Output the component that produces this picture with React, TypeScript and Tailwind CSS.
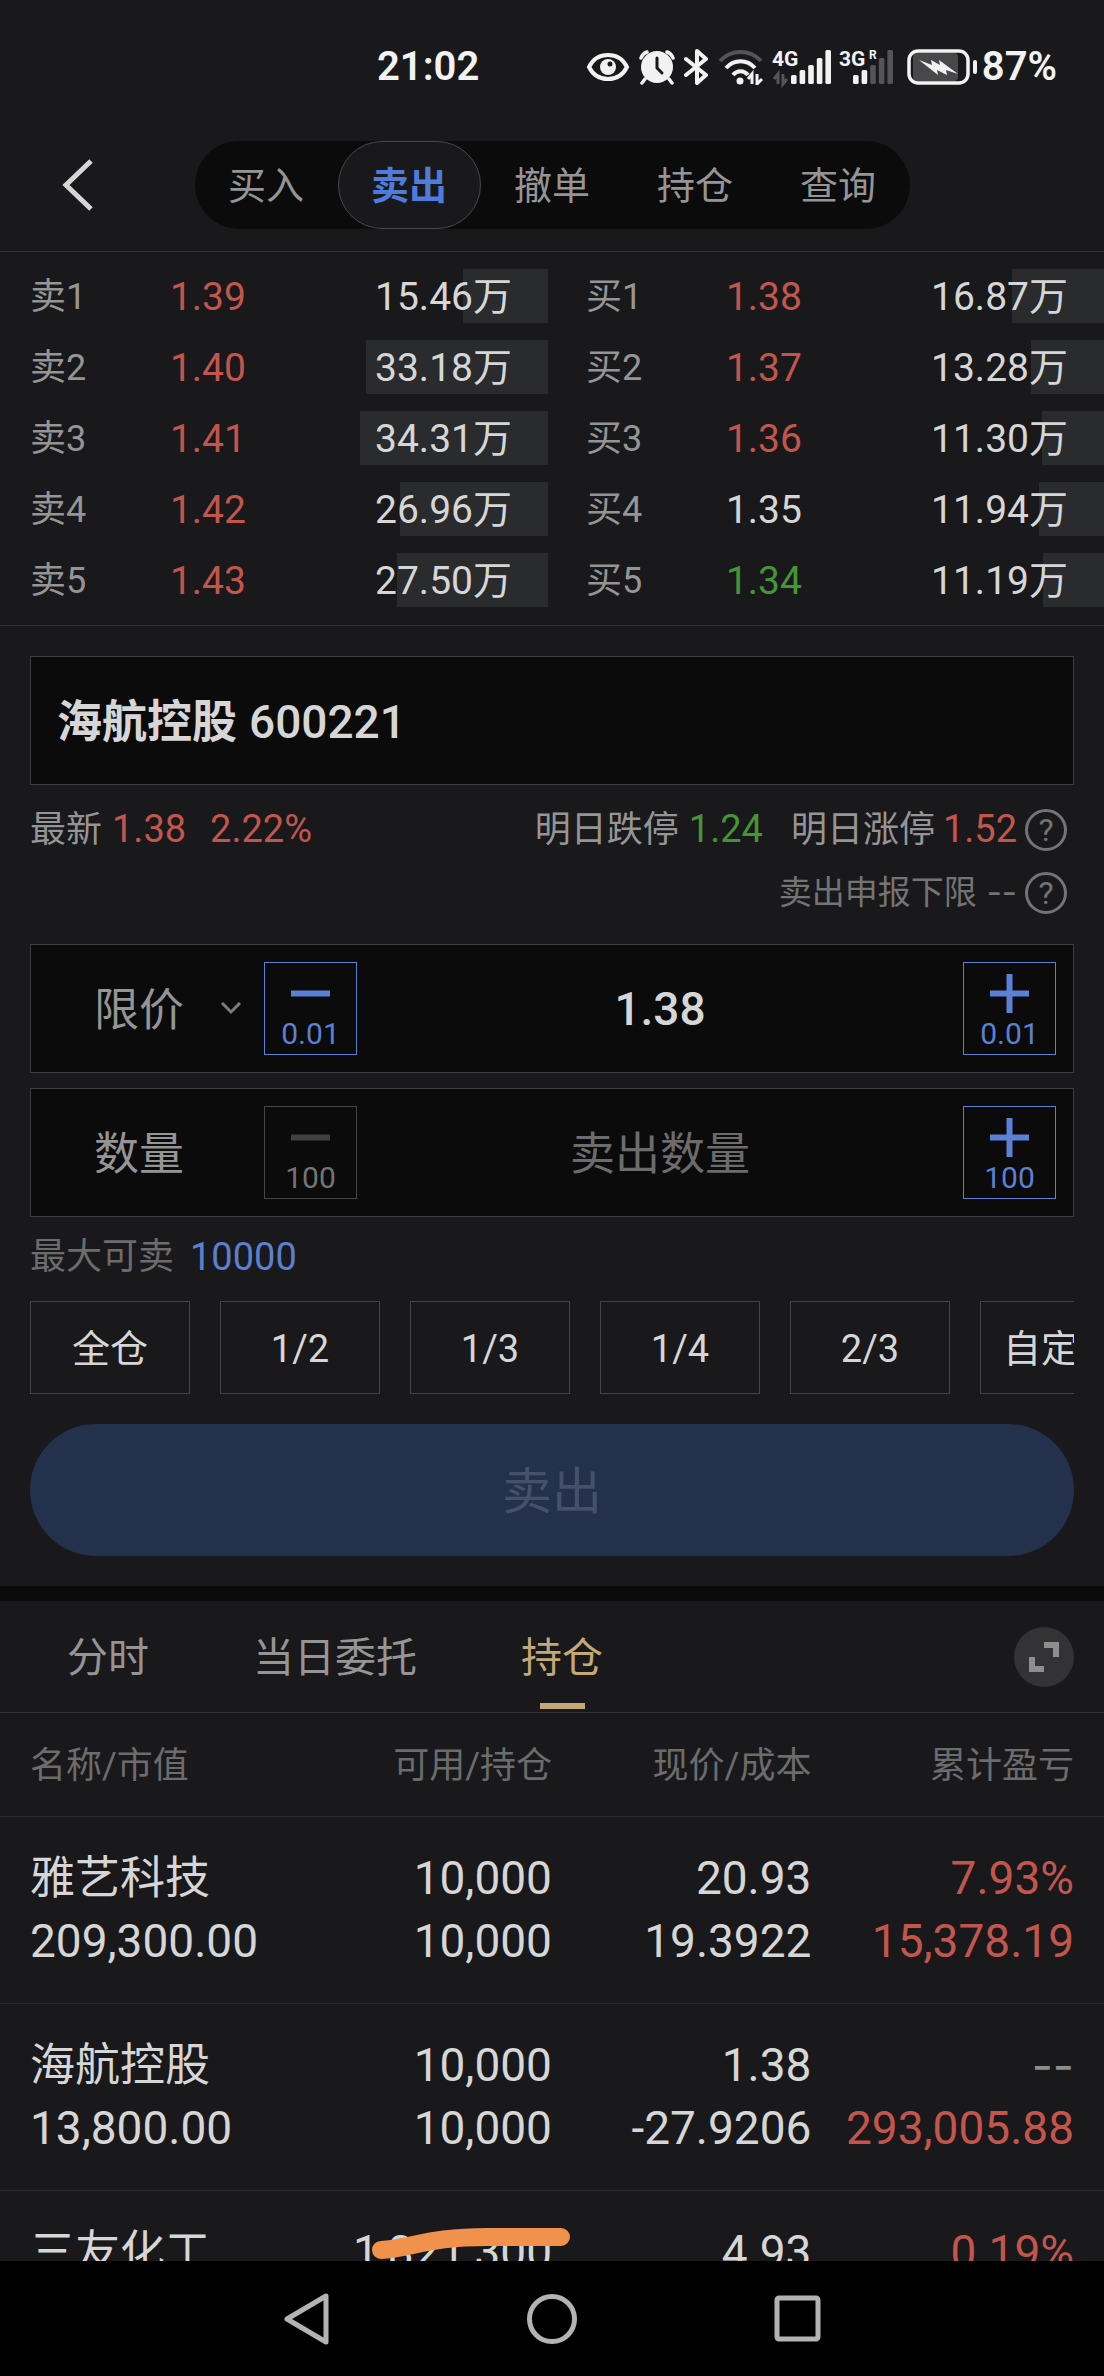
import { useState } from 'react'
import { clsx } from 'clsx'

const navTabs = ['买入', '卖出', '撤单', '持仓', '查询']
const subTabs = ['分时', '当日委托', '持仓']
const fractions = ['全仓', '1/2', '1/3', '1/4', '2/3', '自定义']

const asks = [
  { label: '卖1', price: '1.39', vol: 15.46, tone: 'up' },
  { label: '卖2', price: '1.40', vol: 33.18, tone: 'up' },
  { label: '卖3', price: '1.41', vol: 34.31, tone: 'up' },
  { label: '卖4', price: '1.42', vol: 26.96, tone: 'up' },
  { label: '卖5', price: '1.43', vol: 27.5, tone: 'up' },
]
const bids = [
  { label: '买1', price: '1.38', vol: 16.87, tone: 'up' },
  { label: '买2', price: '1.37', vol: 13.28, tone: 'up' },
  { label: '买3', price: '1.36', vol: 11.3, tone: 'up' },
  { label: '买4', price: '1.35', vol: 11.94, tone: 'flat' },
  { label: '买5', price: '1.34', vol: 11.19, tone: 'down' },
]
const maxVol = Math.max(...[...asks, ...bids].map(l => l.vol))

const toneCls: Record<string, string> = {
  up: 'text-[#c2564d]',
  down: 'text-[#459536]',
  flat: 'text-[#d6d6d6]',
  none: "font-['Inter',sans-serif] text-[#8e8e8e]",
}

const holdings = [
  { name: '雅艺科技', value: '209,300.00', avail: '10,000', total: '10,000', price: '20.93', cost: '19.3922', pct: '7.93%', pnl: '15,378.19', tone: 'up' },
  { name: '海航控股', value: '13,800.00', avail: '10,000', total: '10,000', price: '1.38', cost: '-27.9206', pct: '--', pnl: '293,005.88', tone: 'none' },
  { name: '三友化工', value: '', avail: '1,821,300', total: '', price: '4.93', cost: '', pct: '0.19%', pnl: '', tone: 'up', marked: true },
]

function SignalBars({ tag, lit, roaming }: { tag: string; lit: number; roaming?: boolean }) {
  const tops = [26, 21, 16, 9, 1]
  return (
    <svg width="58" height="36" viewBox="0 0 58 36" className="overflow-visible font-bold">
      {tops.map((y, i) => (
        <rect key={y} x={(roaming ? 13 : 18) + i * 8.6} y={y} width="5.6" height={35 - y} rx="1.5" fill={i < lit ? '#f2f2f2' : '#555557'} />
      ))}
      <text x="-1" y="17" fontSize="21" fill="#f2f2f2">{tag}</text>
      {roaming
        ? <text x="29" y="10" fontSize="12" fill="#f2f2f2">R</text>
        : <path d="M5 35V25L1 30M10 25v10l4-5" stroke="#555557" strokeWidth="3" fill="none" />}
    </svg>
  )
}

function StatusBar() {
  return (
    <div className="flex h-[134px] items-center justify-between pl-[377px] pr-[47px] text-[40px] font-semibold text-[#f2f2f2]">
      <span>21:02</span>
      <div className="flex items-center gap-[9px]">
        <svg width="44" height="30" viewBox="0 0 44 30" fill="none">
          <path d="M3 15C7 7 14 3 22 3s15 4 19 12c-4 8-11 12-19 12S7 23 3 15z" stroke="currentColor" strokeWidth="4" />
          <circle cx="22" cy="15" r="8" fill="currentColor" />
          <circle cx="24" cy="12" r="2.5" fill="#19191b" />
        </svg>
        <svg width="36" height="36" viewBox="0 0 36 36" fill="none" stroke="currentColor" strokeWidth="3.5" strokeLinecap="round">
          <circle cx="18" cy="18" r="16" fill="currentColor" stroke="none" />
          <path d="M2 9c1-3 3-5 6-6M34 9c-1-3-3-5-6-6M6 30l-3 4M30 30l3 4" />
          <path d="M18 9v10l5 5" stroke="#19191b" strokeWidth="3" />
        </svg>
        <svg width="25" height="36" viewBox="0 0 25 36" fill="none" stroke="currentColor" strokeWidth="4" strokeLinejoin="round" strokeLinecap="round">
          <path d="M2 10l20 16-9 8V2l9 8L2 26" />
        </svg>
        <svg width="46" height="36" viewBox="0 0 46 36" fill="none" strokeWidth="4">
          <path d="M2 12c11-12 30-12 41 0" stroke="#555557" />
          <path d="M8 19c8-9 21-9 29 0M15 26c4-5 11-5 15 0" stroke="currentColor" />
          <circle cx="22" cy="32" r="3.5" fill="currentColor" />
          <path d="M34 35V25l-4 5M39 25v10l5-5" stroke="currentColor" strokeWidth="3" />
        </svg>
        <SignalBars tag="4G" lit={5} />
        <SignalBars tag="3G" lit={2} roaming />
        <div className="flex items-center gap-1">
          <svg width="71" height="36" viewBox="0 0 71 36" fill="none">
            <rect x="6" y="4" width="45" height="28" rx="4" fill="#48484a" />
            <rect x="2" y="2" width="59" height="32" rx="9" stroke="currentColor" strokeWidth="3.5" />
            <rect x="66" y="11" width="4" height="14" rx="2" fill="currentColor" />
            <path d="M12 11l13 5-1-5 9 5-1-5 19 14-12-4 1 5-10-5 1 5z" fill="currentColor" />
          </svg>
          <span>87%</span>
        </div>
      </div>
    </div>
  )
}

function OrderBook({ levels, name }: { levels: typeof asks; name: string }) {
  return (
    <table aria-label={name} className="w-full table-fixed border-separate border-spacing-x-0 border-spacing-y-[17px]">
      <tbody>
        {levels.map(l => (
          <tr key={l.label} className="h-[54px] text-[39px] leading-[52px]">
            <th scope="row" className="w-[31%] p-0 pl-[30px] pt-[2px] text-left text-[36px] font-normal text-[#959595]">{l.label}</th>
            <td className={clsx('w-[20%] p-0 pt-[2px]', toneCls[l.tone])}>{l.price}</td>
            <td className="relative p-0 pr-9 pt-[2px] text-right text-[#d6d6d6]">
              <span className="absolute inset-y-0 right-0 bg-[#2a2b2d]" style={{ width: `${(l.vol / maxVol) * 70}%` }} />
              <span className="relative">{l.vol.toFixed(2)}万</span>
            </td>
          </tr>
        ))}
      </tbody>
    </table>
  )
}

function HelpButton({ label }: { label: string }) {
  return (
    <button aria-label={label} className="ml-2 flex size-[42px] items-center justify-center rounded-full border-[3px] border-[#747474] text-[32px] leading-none text-[#747474]">
      ?
    </button>
  )
}

function StepButton({ kind, step, off, onClick }: { kind: 'minus' | 'plus'; step: string; off?: boolean; onClick: () => void }) {
  return (
    <button onClick={onClick} disabled={off} aria-label={`${kind === 'minus' ? '减' : '加'}${step}`}
      className={clsx('flex size-[93px] shrink-0 flex-col items-center border pt-[11px] text-[30px] leading-[42px]', off ? 'border-[#454547] text-[#747474]' : 'border-[#5b80cf] text-[#5b80d4]')}>
      <svg width="39" height="39" viewBox="0 0 39 39" className={clsx('shrink-0', off && 'text-[#404040]')}>
        <path d={kind === 'minus' ? 'M0 19.5h39' : 'M0 19.5h39M19.5 0v39'} stroke="currentColor" strokeWidth="6" />
      </svg>
      {step}
    </button>
  )
}

export default function App() {
  const [nav, setNav] = useState('卖出')
  const [tab, setTab] = useState('持仓')
  const [price, setPrice] = useState('1.38')
  const [qty, setQty] = useState('')

  const stepPrice = (d: number) => setPrice((Number(price) + d).toFixed(2))
  const stepQty = (d: number) => setQty(String(Math.max(0, Number(qty) + d) || ''))

  const boxCls = 'flex items-center border border-[#3e3e40] bg-[#0b0b0b] py-[17px] pr-[17px]'

  return (
    <div className="flex h-screen flex-col overflow-hidden bg-[#19191b] font-['Roboto','Noto_Sans_CJK_SC',sans-serif] text-[#d6d6d6]">
      <StatusBar />

      <header className="relative flex justify-center border-b border-[#343436] pb-[22px] pt-[7px]">
        <button aria-label="返回" className="absolute left-[60px] top-6">
          <svg width="36" height="54" viewBox="0 0 36 54" fill="none" stroke="#d6d6d6" strokeWidth="5">
            <path d="M31 3L6 27l25 24" />
          </svg>
        </button>
        <nav className="flex rounded-full bg-[#0b0b0b]">
          {navTabs.map(t => (
            <button key={t} onClick={() => setNav(t)}
              className={clsx('h-[88px] w-[143px] rounded-full border pt-[2px] text-[38px]', nav === t ? 'border-[#48484a] bg-[#19191b] font-bold text-[#4f7bdb]' : 'border-transparent text-[#959595]')}>
              {t}
            </button>
          ))}
        </nav>
      </header>

      <section className="grid grid-cols-2 gap-2 border-b border-[#343436] pb-px">
        <OrderBook levels={asks} name="卖盘" />
        <OrderBook levels={bids} name="买盘" />
      </section>

      <main className="px-[30px] py-[30px]">
        <div className="flex h-[129px] items-center gap-3 border border-[#3e3e40] bg-[#0b0b0b] px-[26px] pt-1">
          <span className="text-[45px] font-bold">海航控股</span>
          <span className="text-[46px] font-medium">600221</span>
        </div>

        <div className="mt-[23px] flex h-[42px] items-center pr-[7px] pt-px text-[36px] text-[#959595]">
          <span>最新</span>
          <span className="ml-[10px] text-[38px] text-[#c2564d]">1.38</span>
          <span className="ml-6 text-[38px] text-[#c2564d]">2.22%</span>
          <span className="ml-auto">明日跌停</span>
          <span className="ml-[10px] text-[38px] text-[#459536]">1.24</span>
          <span className="ml-7">明日涨停</span>
          <span className="ml-2 text-[38px] text-[#c2564d]">1.52</span>
          <HelpButton label="涨跌停说明" />
        </div>
        <div className="mt-[22px] flex h-[42px] items-center justify-end pr-[7px] text-[33px] text-[#747474]">
          <span>卖出申报下限</span>
          <span className="ml-[10px] font-['Inter',sans-serif]">--</span>
          <HelpButton label="申报下限说明" />
        </div>

        <div className="mt-[30px] space-y-[15px]">
          <div className={boxCls}>
            <div className="relative w-[233px] shrink-0">
              <select aria-label="委托方式" className="w-full appearance-none bg-transparent pl-[63px] pt-1 text-[45px] text-[#959595] outline-none">
                <option>限价</option>
              </select>
              <svg width="20" height="13" viewBox="0 0 20 13" fill="none" stroke="#7c7c7c" strokeWidth="3" className="pointer-events-none absolute inset-y-0 right-[23px] my-auto">
                <path d="M1 1l9 9 9-9" />
              </svg>
            </div>
            <StepButton kind="minus" step="0.01" onClick={() => stepPrice(-0.01)} />
            <input aria-label="卖出价格" value={price} onChange={e => setPrice(e.target.value)}
              className="min-w-0 flex-1 bg-transparent pt-[2px] text-center text-[46px] font-medium outline-none" />
            <StepButton kind="plus" step="0.01" onClick={() => stepPrice(0.01)} />
          </div>
          <div className={boxCls}>
            <label htmlFor="qty" className="w-[233px] shrink-0 pl-[63px] pt-1 text-[45px] text-[#959595]">数量</label>
            <StepButton kind="minus" step="100" off={!qty} onClick={() => stepQty(-100)} />
            <input id="qty" value={qty} onChange={e => setQty(e.target.value)} placeholder="卖出数量"
              className="min-w-0 flex-1 bg-transparent pt-1 text-center text-[45px] outline-none placeholder:text-[#6c6c6c]" />
            <StepButton kind="plus" step="100" onClick={() => stepQty(100)} />
          </div>
        </div>

        <div className="mt-[18px] flex h-[42px] items-center gap-4 pt-[2px] text-[36px] text-[#6c6c6c]">
          <span>最大可卖</span>
          <span className="text-[38px] text-[#5b80cf]">10000</span>
        </div>

        <div className="mt-6 flex gap-[30px] overflow-hidden">
          {fractions.map(f => (
            <button key={f} className="h-[93px] w-[160px] shrink-0 border border-[#434345] pt-1 text-[38px]">{f}</button>
          ))}
        </div>

        <button disabled={!qty} className="mt-[30px] h-[132px] w-full rounded-full bg-[#24314c] pt-1 text-[50px] text-[#465068]">卖出</button>
      </main>

      <section className="flex min-h-0 flex-1 flex-col border-t-[15px] border-[#0b0b0b]">
        <div className="flex h-28 shrink-0 items-center border-b border-[#343436] pl-[66px] pr-[30px]">
          <div role="tablist" className="flex h-full gap-[102px]">
            {subTabs.map(t => (
              <button key={t} role="tab" aria-selected={tab === t} onClick={() => setTab(t)}
                className={clsx('relative h-full pt-1 text-[41px]', tab === t ? 'text-[#c4a877]' : 'text-[#959595]')}>
                <span className="px-px">{t}</span>
                {tab === t && <span className="absolute inset-x-0 bottom-[3px] mx-auto h-[6px] w-[45px] bg-[#c4a877]" />}
              </button>
            ))}
          </div>
          <button aria-label="展开" className="ml-auto flex size-[60px] items-center justify-center rounded-full bg-[#333335]">
            <svg width="30" height="30" viewBox="0 0 30 30" fill="none" stroke="#8e8e8e" strokeWidth="6">
              <path d="M15 3h12v12M3 15v12h12" />
            </svg>
          </button>
        </div>

        <div className="min-h-0 flex-1 overflow-hidden">
          <table className="w-full table-fixed text-right">
            <thead>
              <tr className="h-[103px] border-b border-[#2b2b2d] text-[36px] text-[#6c6c6c]">
                <th className="w-[29%] p-0 pl-[30px] pt-1 text-left font-normal">名称/市值</th>
                <th className="w-[21%] p-0 pt-1 font-normal">可用/持仓</th>
                <th className="w-[23.5%] p-0 pt-1 font-normal">现价/成本</th>
                <th className="p-0 pr-[30px] pt-1 font-normal">累计盈亏</th>
              </tr>
            </thead>
            <tbody>
              {holdings.map(h => (
                <tr key={h.name} className="border-b border-[#2b2b2d] text-[46px] leading-[63px]">
                  <td className="py-[30px] pl-[30px] text-left">
                    <div className="text-[45px]">{h.name}</div>
                    <div>{h.value}</div>
                  </td>
                  <td className="relative py-[30px]">
                    <div>{h.avail}</div>
                    <div>{h.total}</div>
                    {h.marked && (
                      <svg width="200" height="34" viewBox="0 0 200 34" className="absolute -right-[18px] top-9">
                        <path d="M11 23C40 22 58 9 124 10h67" stroke="#f0914c" strokeWidth="18" strokeLinecap="round" fill="none" />
                      </svg>
                    )}
                  </td>
                  <td className="py-[30px]">
                    <div>{h.price}</div>
                    <div>{h.cost}</div>
                  </td>
                  <td className="py-[30px] pr-[30px] text-[#c2564d]">
                    <div className={toneCls[h.tone]}>{h.pct}</div>
                    <div>{h.pnl}</div>
                  </td>
                </tr>
              ))}
            </tbody>
          </table>
        </div>
      </section>

      <footer className="flex h-[115px] shrink-0 items-center justify-center gap-[196px] bg-black">
        <button aria-label="后退">
          <svg width="50" height="54" viewBox="0 0 50 54" fill="none" stroke="#b3b3b3" strokeWidth="5" strokeLinejoin="round">
            <path d="M45 4v46L6 27z" />
          </svg>
        </button>
        <button aria-label="主页">
          <svg width="50" height="50" viewBox="0 0 50 50" fill="none" stroke="#b3b3b3" strokeWidth="5">
            <circle cx="25" cy="25" r="22.5" />
          </svg>
        </button>
        <button aria-label="最近任务">
          <svg width="50" height="50" viewBox="0 0 50 50" fill="none" stroke="#b3b3b3" strokeWidth="5">
            <rect x="4" y="4" width="41" height="41" rx="2" />
          </svg>
        </button>
      </footer>
    </div>
  )
}
